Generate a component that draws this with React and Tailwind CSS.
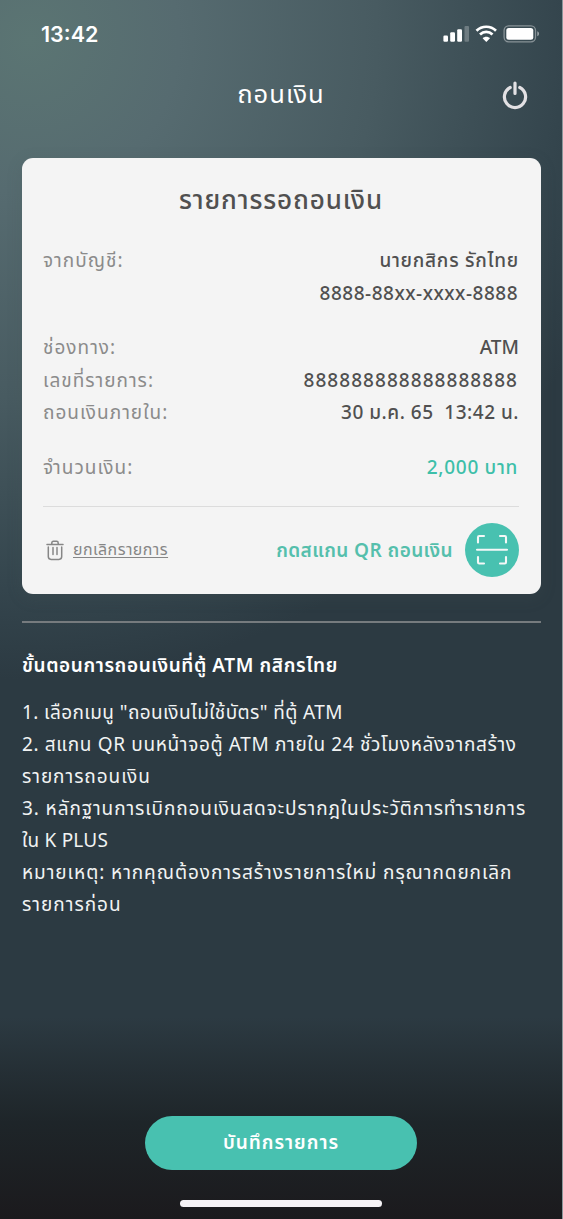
function StatusIcons() {
  return (
    <svg width="99" height="22" viewBox="0 0 99 22" fill="none" aria-hidden="true">
      <g fill="#fff">
        <rect x="0.4" y="12.5" width="4.6" height="6.2" rx="1.200" />
        <rect x="7.200" y="9.300" width="4.800" height="9.400" rx="1.200" />
        <rect x="14.200" y="6.200" width="4.800" height="12.500" rx="1.200" />
        <rect x="21.500" y="3" width="4.500" height="15.700" rx="1" fillOpacity="0.25" />
      </g>
      <g stroke="#fff" strokeWidth="2.700">
        <path d="M33.500 7.700c5.400-5.300 14.100-5.300 19.500 0" />
        <path d="M37 11.500c3.600-3.600 8.900-3.600 12.500 0" />
      </g>
      <path d="M39.600 15.300c2-2 5.400-2 7.400 0l-3.700 3.600z" fill="#fff" />
      <rect x="61.100" y="2.800" width="31.400" height="16" rx="4.500" stroke="#fff" strokeOpacity="0.4" strokeWidth="1.300" />
      <rect x="63.300" y="4.900" width="27" height="11.900" rx="2.500" fill="#fff" />
      <path d="M94.300 8.300v5c1.200-.5 1.700-1.300 1.700-2.500s-.5-2-1.700-2.500z" fill="#fff" fillOpacity="0.5" />
    </svg>
  );
}

function PowerIcon() {
  return (
    <svg width="30" height="32" viewBox="0 0 30 32" fill="none" stroke="#e3e1e4" strokeWidth="3.200" strokeLinecap="round">
      <path d="M15 3v10.500M10.200 7.500a10.600 10.600 0 1 0 9.600 0" />
    </svg>
  );
}

function TrashIcon() {
  return (
    <svg width="18" height="21" viewBox="0 0 18 21" fill="none" stroke="#868686" strokeWidth="1.500" strokeLinecap="round" strokeLinejoin="round">
      <path d="M1 4.500h16M5.800 4.500V3c0-1 .6-1.700 1.600-1.700h3.200c1 0 1.600.7 1.600 1.700v1.500" />
      <path d="M2.300 7v9.600c0 1.800 1 2.800 2.800 2.800h7.800c1.800 0 2.800-1 2.800-2.800V7M7 7.500v7M11 7.500v7" />
    </svg>
  );
}

function ScanIcon() {
  return (
    <svg width="32" height="32" viewBox="0 0 32 32" fill="none" stroke="#f4f8f7" strokeWidth="2.100" strokeLinecap="round" strokeLinejoin="round">
      <path d="M2 8.500V3.200c0-.8.4-1.200 1.200-1.200H8M24 2h4.800c.8 0 1.200.4 1.200 1.200v5.300M2 23v5.300c0 .8.400 1.200 1.200 1.200H8M24 29.500h4.800c.8 0 1.200-.4 1.200-1.200V23" />
      <path d="M1 15.700h30" />
    </svg>
  );
}

function Row({ label, value, className = "", valueClassName = "text-[#505050]" }) {
  return (
    <div className={`flex items-center justify-between whitespace-pre ${className}`}>
      <span className="tracking-[1px] text-[#8b8b8b]">{label}</span>
      <span className={`font-medium ${valueClassName}`}>{value}</span>
    </div>
  );
}

const steps = [
  { text: '1. เลือกเมนู "ถอนเงินไม่ใช้บัตร" ที่ตู้ ATM', tracking: "tracking-[0.4px]" },
  { text: "2. สแกน QR บนหน้าจอตู้ ATM ภายใน 24 ชั่วโมงหลังจากสร้าง", tracking: "tracking-[0.65px]" },
  { text: "รายการถอนเงิน", tracking: "tracking-[0.95px]" },
  { text: "3. หลักฐานการเบิกถอนเงินสดจะปรากฎในประวัติการทำรายการ", tracking: "tracking-[0.9px]" },
  { text: "ใน K PLUS", tracking: "tracking-[0.2px]" },
  { text: "หมายเหตุ: หากคุณต้องการสร้างรายการใหม่ กรุณากดยกเลิก", tracking: "tracking-[0.93px]" },
  { text: "รายการก่อน", tracking: "tracking-[1px]" },
];

export default function App() {
  return (
    <div className="flex h-[1219px] w-[563px] flex-col overflow-hidden border-r border-[#8b969b] bg-[radial-gradient(ellipse_620px_640px_at_30px_40px,#5b7573_0%,#566b70_24%,#485b61_56%,#34454d_86%,#2c3a42_100%)] bg-[#2c3a42] font-['Noto_Sans_Thai','Noto_Sans',sans-serif] text-[19px]">
      <div className="flex h-[68px] shrink-0 items-center justify-between pr-[20px] pl-[41px]">
        <span className="font-['Inter',sans-serif] text-[21.5px] font-semibold text-white">13:42</span>
        <StatusIcons />
      </div>

      <header className="grid h-[90px] shrink-0 grid-cols-[1fr_auto_1fr] items-start px-[32px] pt-[7px]">
        <h1 className="col-start-2 text-[25.5px] leading-[40px] tracking-[1px] text-white">ถอนเงิน</h1>
        <button type="button" className="mt-[5px] justify-self-end">
          <PowerIcon />
        </button>
      </header>

      <section className="mr-[21px] ml-[22px] flex h-[436px] shrink-0 flex-col rounded-[11px] bg-[#f4f4f4] pr-[22px] pl-[21px] shadow-[0_4px_16px_rgba(70,85,85,0.2)]">
        <h2 className="mt-[23px] text-center text-[26px] leading-[40px] font-medium tracking-[0.9px] text-[#505050]">
          รายการรอถอนเงิน
        </h2>
        <Row className="mt-[25px] h-[33px]" label="จากบัญชี:" value="นายกสิกร รักไทย" valueClassName="tracking-[0.75px] text-[#505050]" />
        <Row className="h-[33px]" label="" value="8888-88xx-xxxx-8888" valueClassName="mr-[1px] tracking-[0.5px] text-[#505050]" />
        <Row className="mt-[21px] h-[33px]" label="ช่องทาง:" value="ATM" />
        <Row className="h-[33px]" label="เลขที่รายการ:" value="888888888888888888" valueClassName="mr-[1px] tracking-[1.05px] text-[#505050]" />
        <Row className="h-[31px]" label="ถอนเงินภายใน:" value="30 ม.ค. 65  13:42 น." valueClassName="tracking-[0.5px] text-[#505050]" />
        <Row className="mt-[23px] h-[33px]" label="จำนวนเงิน:" value="2,000 บาท" valueClassName="mr-[1px] tracking-[0.7px] text-[#3dbfa9]" />

        <div className="mt-[20px] flex items-center justify-between border-t border-[#dcdcdc] pt-[16px]">
          <button type="button" className="flex items-center gap-[9px] pl-[3px] text-[16px] text-[#868686]">
            <TrashIcon />
            <span className="tracking-[0.45px] underline decoration-1 underline-offset-2">ยกเลิกรายการ</span>
          </button>
          <button type="button" className="flex items-center gap-[12px] font-semibold text-[#55bfac]">
            <span className="mt-[4px] tracking-[0.4px]">กดสแกน QR ถอนเงิน</span>
            <span className="flex size-[54px] items-center justify-center rounded-full bg-[#48c1b0]">
              <ScanIcon />
            </span>
          </button>
        </div>
      </section>

      <section className="mt-[27px] mr-[21px] ml-[22px] border-t-2 border-[#767b7e] text-white">
        <h3 className="mt-[27px] leading-[34px] font-semibold tracking-[0.6px]">
          ขั้นตอนการถอนเงินที่ตู้ ATM กสิกรไทย
        </h3>
        <div className="mt-[14px] leading-[32px] whitespace-nowrap text-[#f1f3f3]">
          {steps.map((step) => (
            <p key={step.text} className={step.tracking}>
              {step.text}
            </p>
          ))}
        </div>
      </section>

      <footer className="mt-auto flex h-[219px] shrink-0 flex-col items-center bg-linear-to-b from-[#2c3a42] from-8% via-[#1e2529] via-56% to-[#1b1a1d] pt-[116px]">
        <button type="button" className="h-[54px] w-[272px] rounded-full bg-[#48c1b0] pt-[2px] font-semibold tracking-[1px] text-white">
          บันทึกรายการ
        </button>
        <div className="mt-[30px] h-[7px] w-[202px] rounded-full bg-[#f6f3f6]" />
      </footer>
    </div>
  );
}
